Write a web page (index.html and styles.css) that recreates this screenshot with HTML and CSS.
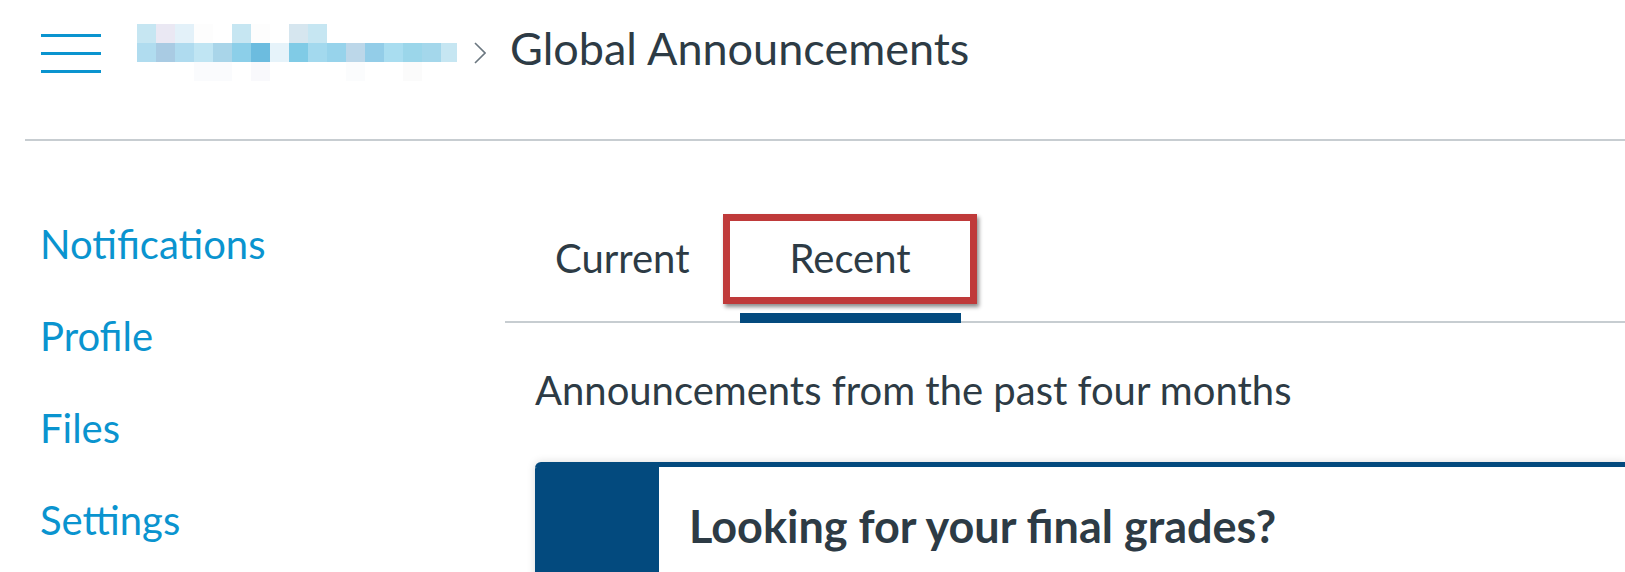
FILE: index.html
```html
<!DOCTYPE html>
<html lang="en">

<head>
    <meta charset="UTF-8">
    <meta name="viewport" content="width=device-width, initial-scale=1.0">
    <title>Global Announcements</title>
    <link rel="stylesheet" href="styles.css">
</head>

<body>
    <div id="header">
        <div class="header-row">
            <svg class="burger" width="60" height="39" viewBox="0 0 60 39">
                <rect x="0" y="0" width="60" height="3" />
                <rect x="0" y="18" width="60" height="3" />
                <rect x="0" y="36" width="60" height="3" />
            </svg>
            <div class="blur">
                <div class="blur-row r1"></div>
                <div class="blur-row r2"></div>
                <div class="blur-row r3"></div>
            </div>
            <svg class="chevron" width="12" height="22" viewBox="0 0 12 22">
                <polyline points="1,1 11,11 1,21" />
            </svg>
            <h1 class="crumb">Global Announcements</h1>
        </div>
    </div>

    <div id="main">
        <ul class="side-nav">
            <li><a href="#">Notifications</a></li>
            <li><a href="#">Profile</a></li>
            <li><a href="#">Files</a></li>
            <li><a href="#">Settings</a></li>
        </ul>

        <div class="content">
            <div class="tabs">
                <div class="tab">Current</div>
                <div class="tab active">
                    Recent
                    <div class="highlight"></div>
                </div>
            </div>

            <p class="intro">Announcements from the past four months</p>

            <div class="card">
                <div class="card-side"></div>
                <div class="card-body">
                    <h3 class="card-title">Looking for your final grades?</h3>
                </div>
            </div>
        </div>
    </div>
</body>

</html>
```

FILE: styles.css
```css
html {
    height: 100%;
}

body {
    margin: 0;
    font-family: Lato, "Open Sans", sans-serif;
    color: #2d3b45;
    background: #fff;
    overflow: hidden;
}

#header {
    margin-left: 25px;
    height: 139px;
    border-bottom: 2px solid #c7cdd1;
}

.header-row {
    display: flex;
    align-items: center;
    height: 104px;
    padding-left: 16px;
}

.burger {
    fill: #0a94cf;
    margin-top: 2px;
}

.blur {
    margin-left: 36px;
    display: flex;
    flex-direction: column;
    align-self: flex-start;
    padding-top: 24px;
}

.blur-row {
    width: 320px;
    height: 19px;
}

.r1 {
    background: linear-gradient(to right,
            #c6e6f2 0 19px, #eae8f3 19px 38px, #e3f1f9 38px 57px, #fdfdfd 57px 76px,
            #fff 76px 95px, #c6e6f2 95px 114px, #fdfdfd 114px 133px, #fff 133px 152px,
            #d6e6ef 152px 171px, #c6e6f2 171px 190px, #fff 190px);
}

.r2 {
    background: linear-gradient(to right,
            #b0dcef 0 19px, #a9cbe3 19px 38px, #afdbef 38px 57px, #c0e5f3 57px 76px,
            #a9d5e9 76px 95px, #8ccfe9 95px 114px, #6cbcdf 114px 133px, #e6f3fa 133px 152px,
            #80cbe6 152px 171px, #a3d9ee 171px 190px, #97d3eb 190px 209px, #bcd7e9 209px 228px,
            #93cde8 228px 247px, #a9ddf0 247px 266px, #9bd6ea 266px 285px, #a4d7eb 285px 304px,
            #c6e6f2 304px 320px);
}

.r3 {
    background: linear-gradient(to right,
            #fff 0 57px, #fafbfd 57px 95px, #fff 95px 114px, #f9f9fc 114px 133px,
            #fff 133px 209px, #fbfcfd 209px 228px, #fff 228px 266px, #fbfbfb 266px 285px, #fff 285px);
}

.chevron {
    margin-left: 17px;
    margin-top: 1px;
    fill: none;
    stroke: #6b7780;
    stroke-width: 1.6;
}

.crumb {
    margin: 0 0 8px 24px;
    font-size: 45px;
    font-weight: normal;
    line-height: 1.25;
}

#main {
    display: flex;
}

.side-nav {
    list-style: none;
    margin: 0;
    width: 505px;
    box-sizing: border-box;
    padding: 73px 0 0 40px;
    flex-shrink: 0;
}

.side-nav li {
    font-size: 40px;
    line-height: 60px;
    margin-bottom: 32px;
}

.side-nav a {
    color: #0a94cf;
    text-decoration: none;
}

.content {
    flex: 1;
    padding-top: 62px;
}

.tabs {
    display: flex;
    border-bottom: 2px solid #c7cdd1;
}

.tab {
    position: relative;
    font-size: 40px;
    line-height: 60px;
    padding: 25px 50px;
    margin-bottom: -2px;
    border-bottom: 10px solid transparent;
}

.tab.active {
    border-bottom-color: #034a7e;
}

/* red annotation round the active tab */
.highlight {
    position: absolute;
    left: -17px;
    top: 11px;
    width: 254px;
    height: 90px;
    box-sizing: border-box;
    border: 7px solid #bf3a3a;
    box-shadow: 2px 3px 4px rgba(0, 0, 0, .45);
}

.intro {
    margin: 37px 0 0 30px;
    font-size: 40px;
    line-height: 60px;
}

.card {
    display: flex;
    margin: 42px 0 0 30px;
    min-height: 200px;
    border-top: 5px solid #034a7e;
    border-top-left-radius: 6px;
    box-shadow: 0 0 8px rgba(0, 0, 0, .15);
    background: #fff;
}

.card-side {
    width: 124px;
    background: #034a7e;
    border-top-left-radius: 2px;
}

.card-body {
    padding: 31px 0 0 30px;
}

.card-title {
    margin: 0;
    font-size: 45px;
    font-weight: bold;
    line-height: 1.25;
}
```
